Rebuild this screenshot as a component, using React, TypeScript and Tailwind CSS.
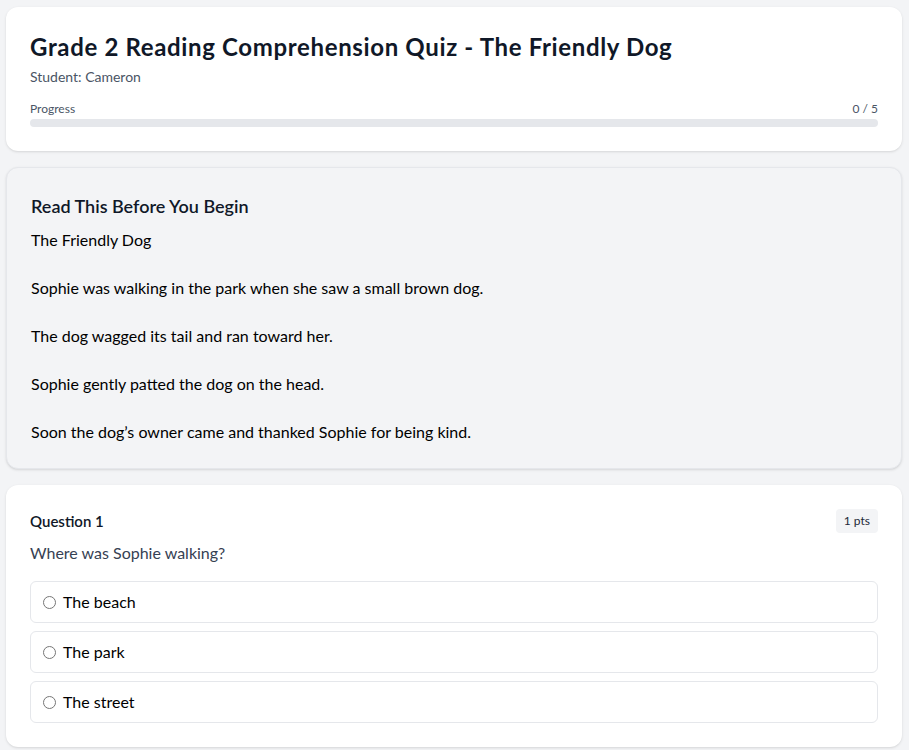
import { useState } from 'react';

const passage = `The Friendly Dog

Sophie was walking in the park when she saw a small brown dog.

The dog wagged its tail and ran toward her.

Sophie gently patted the dog on the head.

Soon the dog’s owner came and thanked Sophie for being kind.`;

const options = ['The beach', 'The park', 'The street'];

export default function App() {
  const [answer, setAnswer] = useState<string | null>(null);

  return (
    <div
      className="min-h-screen bg-gray-100 pl-[6px] pr-[7px] py-[7px] space-y-4"
      style={{ fontFamily: '"Segoe UI", Lato, sans-serif' }}
    >
      <div className="bg-white rounded-xl shadow p-6">
        <h1 className="text-2xl font-bold text-gray-900 tracking-[0.65px]">
          Grade 2 Reading Comprehension Quiz - The Friendly Dog
        </h1>
        <p className="text-sm text-gray-600 mt-1">Student: Cameron</p>
        <div className="mt-3.5">
          <div className="flex justify-between text-xs text-gray-600 mb-0.5">
            <span>Progress</span>
            <span>0 / 5</span>
          </div>
          <div className="h-2 w-full bg-gray-200 rounded-full"></div>
        </div>
      </div>

      <div className="bg-gray-100 rounded-xl border border-gray-200 shadow p-6">
        <h2 className="text-lg font-semibold text-gray-900">Read This Before You Begin</h2>
        <p className="mt-2 whitespace-pre-wrap text-black leading-6">{passage}</p>
      </div>

      <div className="bg-white rounded-xl shadow p-6">
        <div className="flex items-center justify-between">
          <h3 className="text-[15px] font-semibold text-gray-900">Question 1</h3>
          <span className="text-xs text-gray-800 bg-gray-100 rounded px-2 py-1">1 pts</span>
        </div>
        <p className="mt-2 text-gray-700">Where was Sophie walking?</p>
        <div className="mt-4 space-y-2">
          {options.map((opt) => (
            <label
              key={opt}
              className="flex items-center gap-[7px] border border-gray-200 rounded-md px-3 h-[42px] cursor-pointer"
            >
              <input
                type="radio"
                name="q1"
                checked={answer === opt}
                onChange={() => setAnswer(opt)}
                className="w-[13px] h-[13px]"
              />
              <span className="text-black">{opt}</span>
            </label>
          ))}
        </div>
      </div>
    </div>
  );
}
